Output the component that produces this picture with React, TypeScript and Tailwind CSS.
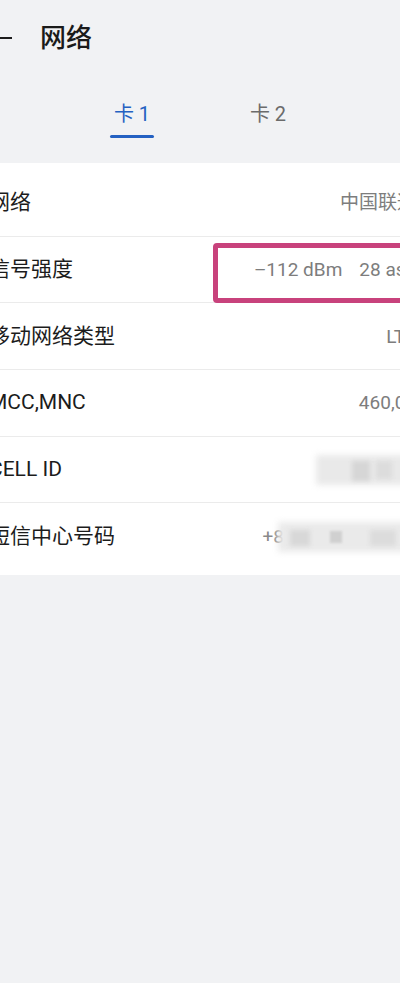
import React from "react";

const font = { fontFamily: 'Roboto, "Noto Sans CJK SC", "Noto Sans", sans-serif' };

function Row({ label, children, last }: { label: string; children: React.ReactNode; last?: boolean }) {
  return (
    <div className={`h-[66.7px] flex items-center justify-between ${last ? "" : "border-b border-[#ebebeb]"}`}>
      <span className="text-[21px] text-[#1c1c1c] leading-none whitespace-nowrap">{label}</span>
      <div className="flex items-center text-[19px] text-[#7d7d7d] leading-none whitespace-nowrap">{children}</div>
    </div>
  );
}

export default function App() {
  return (
    <div className="w-[400px] h-[983px] overflow-hidden bg-[#f1f2f4] relative" style={font}>
      <div className="relative ml-[-27px] w-[459px]">
        {/* header */}
        <div className="h-[76px] flex items-center">
          <svg width="24" height="24" viewBox="0 0 24 24" className="ml-[15px]" fill="none" stroke="#1c1c1c" strokeWidth="2.2" strokeLinecap="round">
            <path d="M2 12h21.5" />
            <path d="M9 5l-7 7 7 7" />
          </svg>
          <span className="ml-[28px] text-[26px] font-medium text-[#1a1a1a] leading-none">网络</span>
        </div>
        {/* tabs */}
        <div className="h-[87px] flex items-start pt-[24px] pl-[137px] gap-[92px]">
          <div className="w-[44px] flex flex-col items-center">
            <span className="h-[28px] flex items-center text-[20px] text-[#2461c2] whitespace-nowrap">卡 1</span>
            <div className="mt-[7px] w-[44px] h-[3px] rounded-full bg-[#2461c2]" />
          </div>
          <div className="w-[44px] flex flex-col items-center">
            <span className="h-[28px] flex items-center text-[20px] text-[#6b6b6b] whitespace-nowrap">卡 2</span>
          </div>
        </div>
        {/* card */}
        <div className="bg-white pt-[7px] pb-[5px] px-[16px]">
          <Row label="网络">中国联通</Row>
          <Row label="信号强度">
            <span>–112 dBm</span>
            <span className="ml-[17px]">28 asu</span>
          </Row>
          <Row label="移动网络类型">LTE</Row>
          <Row label="MCC,MNC">460,01</Row>
          <Row label="CELL ID">
            <div className="relative w-[100px] h-[30px]">
              <div className="absolute inset-0 bg-[#e9e9e9] blur-[3px]" />
              <div className="absolute left-[36px] top-[6px] w-[18px] h-[20px] bg-[#d6d6d6] blur-[2px]" />
              <div className="absolute left-[60px] top-[6px] w-[16px] h-[18px] bg-[#dcdcdc] blur-[2px]" />
            </div>
          </Row>
          <Row label="短信中心号码" last>
            <span className="text-[#8a8a8a]">+8</span>
            <div className="relative w-[138px] h-[30px] ml-[-6px]">
              <div className="absolute inset-0 bg-[#eaeaea] blur-[3px]" />
              <div className="absolute left-[12px] top-[8px] w-[20px] h-[16px] bg-[#d8d8d8] blur-[2px]" />
              <div className="absolute left-[52px] top-[9px] w-[12px] h-[12px] bg-[#d0d0d0] blur-[1px]" />
              <div className="absolute left-[92px] top-[8px] w-[26px] h-[16px] bg-[#dcdcdc] blur-[2px]" />
            </div>
          </Row>
        </div>
        {/* highlight */}
        <div className="absolute left-[240px] top-[243px] w-[210px] h-[60px] border-[5px] border-[#c8427c] rounded-[4px]" />
      </div>
    </div>
  );
}
